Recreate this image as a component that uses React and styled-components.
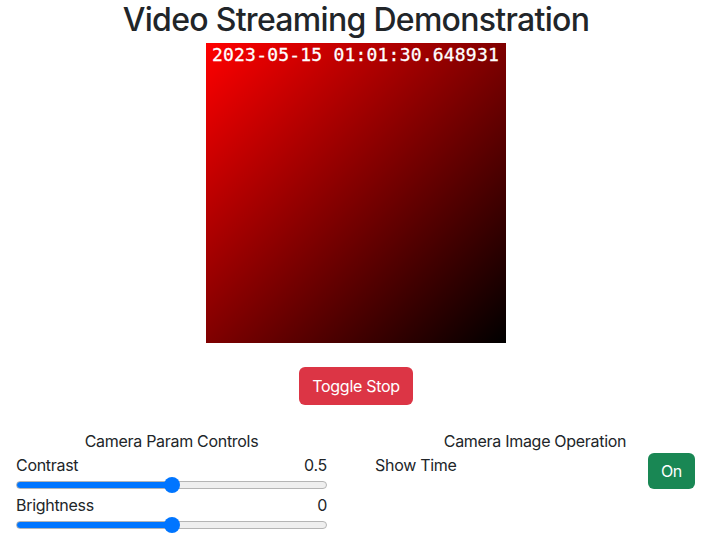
import React from "react";
import styled, { createGlobalStyle } from "styled-components";

const GlobalStyle = createGlobalStyle`
  body {
    margin: 0;
    font-family: Inter, "Liberation Sans", sans-serif;
    font-size: 16px;
    letter-spacing: -0.3px;
    color: #212529;
    background: #fff;
  }
`;

const Page = styled.div`
  display: flex;
  flex-direction: column;
  align-items: center;
  padding-right: 4px;
`;

const Title = styled.h1`
  margin: 0 0 4px;
  font-size: 32px;
  font-weight: 500;
  line-height: 39px;
  letter-spacing: -0.7px;
`;

const Frame = styled.div`
  width: 300px;
  height: 300px;
  background: linear-gradient(135deg, #ff0000 0%, #000000 100%);
`;

const Stamp = styled.div`
  padding: 1px 0 0 6px;
  font-family: "DejaVu Sans Mono", "Liberation Mono", monospace;
  font-size: 18px;
  font-weight: normal;
  color: #fff;
  letter-spacing: 0.2px;
  -webkit-text-stroke: 0.3px #fff;
`;

const Button = styled.button`
  font-family: inherit;
  font-size: 16px;
  line-height: 24px;
  letter-spacing: -0.3px;
  color: #fff;
  background: ${(p) => p.$bg};
  border: none;
  border-radius: 6px;
  padding: ${(p) => p.$pad};
  cursor: pointer;
`;

const ToggleRow = styled.div`
  margin: 24px 0;
`;

const Controls = styled.div`
  align-self: stretch;
  display: flex;
  gap: 48px;
  padding: 0 17px 0 16px;
`;

const Column = styled.div`
  width: ${(p) => p.$w};
  display: flex;
  flex-direction: column;
`;

const Heading = styled.div`
  text-align: center;
  line-height: 24px;
`;

const Row = styled.div`
  display: flex;
  justify-content: space-between;
  align-items: flex-start;
  line-height: 24px;
`;

const Range = styled.input`
  -webkit-appearance: none;
  appearance: none;
  width: 100%;
  height: 16px;
  margin: 0;
  background: transparent;

  &::-webkit-slider-runnable-track {
    height: 8px;
    border-radius: 4px;
    border: 1px solid #b5b5b5;
    box-sizing: border-box;
    background: linear-gradient(
      to right,
      #0075ff 0%,
      #0075ff ${(p) => p.$pct}%,
      #efefef ${(p) => p.$pct}%,
      #efefef 100%
    );
  }
  &::-webkit-slider-thumb {
    -webkit-appearance: none;
    width: 16px;
    height: 16px;
    border-radius: 50%;
    background: #0075ff;
    margin-top: -5px;
  }
`;

const Slider = ({ label, value }) => (
  <>
    <Row>
      <span>{label}</span>
      <span>{value}</span>
    </Row>
    <Range type="range" min="0" max="100" defaultValue="50" $pct={50} />
  </>
);

export default function App() {
  return (
    <Page>
      <GlobalStyle />
      <Title>Video Streaming Demonstration</Title>
      <Frame>
        <Stamp>2023-05-15 01:01:30.648931</Stamp>
      </Frame>
      <ToggleRow>
        <Button $bg="#dc3545" $pad="7px 13px">Toggle Stop</Button>
      </ToggleRow>
      <Controls>
        <Column $w="311px">
          <Heading>Camera Param Controls</Heading>
          <Slider label="Contrast" value="0.5" />
          <Slider label="Brightness" value="0" />
        </Column>
        <Column $w="320px">
          <Heading>Camera Image Operation</Heading>
          <Row>
            <span>Show Time</span>
            <Button $bg="#198754" $pad="6px 13px">On</Button>
          </Row>
        </Column>
      </Controls>
    </Page>
  );
}
